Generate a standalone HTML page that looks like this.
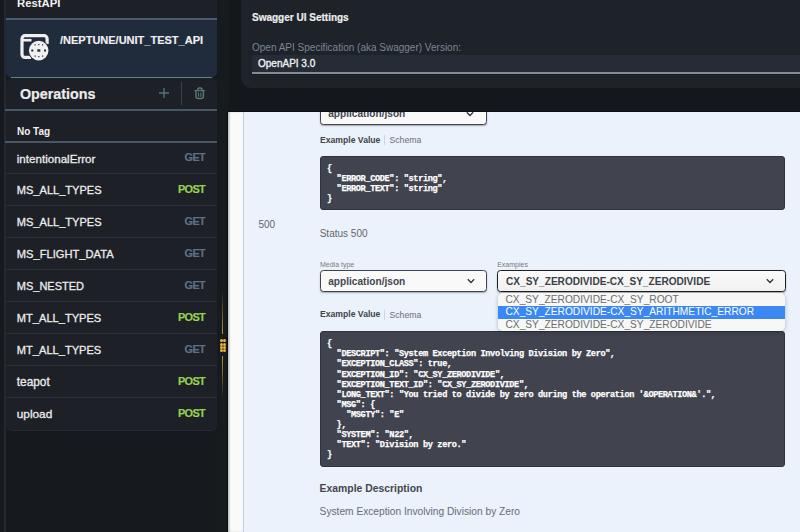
<!DOCTYPE html>
<html><head><meta charset="utf-8">
<style>
*{margin:0;padding:0;box-sizing:border-box}
html,body{width:800px;height:532px;overflow:hidden;background:#16191d;font-family:"Liberation Sans",sans-serif;position:relative}
.abs{position:absolute;line-height:1}
/* sidebar */
#side{left:0;top:0;width:228px;height:532px;background:#16191d}
#sideline{left:3.8px;top:0;width:2.2px;height:532px;background:#232930}
#restpanel{left:5px;top:-10px;width:212.5px;height:88px;background:#1d2026;border-radius:0 0 10px 10px}
#resttitle{left:17px;top:-2.2px;font-weight:bold;font-size:11.3px;color:#f2f2f2;white-space:nowrap}
#restline{left:5px;top:18px;width:212.5px;height:1.5px;background:#4b5b6d}
#card{left:5px;top:19px;width:212.5px;height:59px;background:#202b3c;border-radius:0 0 8px 8px}
#cardline{left:11px;top:77px;width:200.5px;height:1.2px;background:#5f8479}
#apiname{left:60px;top:34.7px;font-weight:bold;font-size:11px;color:#f0f0f0;-webkit-text-stroke:0.15px #f0f0f0;white-space:nowrap}
#ops{left:5px;top:78px;width:212.5px;height:353px;background:#1d2026;border-radius:8px;border-bottom:1.3px solid #262b32}
#opstitle{left:20px;top:86.9px;font-weight:bold;font-size:14.3px;color:#ececec;-webkit-text-stroke:0.2px #ececec;white-space:nowrap}
.hline{position:absolute;left:5px;width:212.5px;height:1.5px;background:#4a5765}
#notag{left:17px;top:126.5px;font-weight:bold;font-size:10px;color:#f0f0f0}
.row{position:absolute;left:5px;width:212px;height:31px}
.row .n{position:absolute;left:11.8px;top:10.6px;-webkit-text-stroke:0.3px #ececec;line-height:1;font-size:11.5px;color:#ececec;white-space:nowrap}
.row .m{position:absolute;right:11.9px;top:9.9px;-webkit-text-stroke:0.2px currentColor;line-height:1;font-weight:bold;font-size:10.9px;letter-spacing:-0.62px;white-space:nowrap}
.get{color:#5d7085}
.post{color:#96d14d}
#splitter{left:217px;top:0;width:11.8px;height:532px;background:#161b1e}
#yline1{left:222.2px;top:290px;width:1.3px;height:43.5px;background:linear-gradient(to bottom,rgba(200,150,50,0),#b98f3c)}
#yline2{left:222.2px;top:356px;width:1.3px;height:43.5px;background:linear-gradient(to top,rgba(200,150,50,0),#b98f3c)}
.dot{position:absolute;width:3px;height:3px;border-radius:50%;background:#e9b23c}
/* top dialog */
#dlg{left:240.5px;top:0;width:570px;height:88px;background:#1e2229;border-radius:0 0 0 10px}
#dlgtitle{left:252px;top:12.7px;font-weight:bold;font-size:10px;color:#ededed;-webkit-text-stroke:0.2px #ededed;white-space:nowrap}
#dlglabel{left:252px;top:43px;font-size:10px;color:#7b8794;white-space:nowrap}
#inp{left:252px;top:55px;width:560px;height:19.3px;background:#252c36;border-bottom:2px solid #858c94;box-shadow:0 1px 0 #15181c;border-radius:3px 0 0 0}
#inptext{left:258px;top:58.6px;font-size:10px;-webkit-text-stroke:0.35px #f0f0f0;color:#f0f0f0;white-space:nowrap}
/* main */
#main{left:228px;top:112px;width:572px;height:420px;background:#fafafa;box-shadow:inset 1.5px 0 1.5px rgba(0,0,0,.25)}
#mainshadow{left:228px;top:110px;width:572px;height:2px;background:#0e1013}
#panel{left:243px;top:112px;width:557px;height:420px;background:#ebf2fb;border-left:1.5px solid #b7cff2}
.t{position:absolute;white-space:nowrap;line-height:1}
.sel{position:absolute;background:#f9f9f9;border:1.5px solid #41444e;border-radius:3.5px;box-shadow:0 1px 1.5px rgba(0,0,0,.3)}
.chev{position:absolute;width:5px;height:5px;border-right:1.3px solid #333;border-bottom:1.3px solid #333;transform:rotate(45deg)}
.code{position:absolute;background:#41444e;border:1px solid #30333a;border-radius:3px;color:#fff;font-family:"Liberation Mono",monospace;font-weight:bold;font-size:8.6px;letter-spacing:-0.36px;line-height:10.1px;padding:7.8px 6px 6px;white-space:pre;-webkit-text-stroke:0.25px #fff}
</style></head><body>
<div id="side" class="abs"></div>
<div id="restpanel" class="abs"></div>
<div id="resttitle" class="abs">RestAPI</div>
<div id="card" class="abs"></div>
<div id="restline" class="abs"></div>
<div id="ops" class="abs"></div>
<div id="cardline" class="abs"></div>
<svg class="abs" style="left:19px;top:32px" width="34" height="32" viewBox="0 0 34 32">
  <path d="M12 25.4 H6 a3 3 0 0 1 -3 -3 V6.7 a3 3 0 0 1 3 -3 H25.1 a3 3 0 0 1 3 3 V12" fill="none" stroke="#f0f0f0" stroke-width="3.2"/>
  <path d="M3.5 8.2 H12.5" stroke="#f0f0f0" stroke-width="2.6"/>
  <circle cx="19.7" cy="18.6" r="10.6" fill="#202b3c"/>
  <circle cx="19.7" cy="18.6" r="9.8" fill="#f0f0f0"/>
  <g fill="#202b3c">
    <rect x="12.3" y="17.5" width="2" height="2"/><rect x="18.3" y="17.3" width="3" height="2.4"/><rect x="25" y="17.5" width="2" height="2"/>
    <rect x="15.5" y="12.3" width="1.2" height="1.2"/><rect x="19.2" y="12" width="1.2" height="1.2"/><rect x="23" y="12.3" width="1.2" height="1.2"/>
    <rect x="15.5" y="23.5" width="1.2" height="1.2"/><rect x="19.2" y="24" width="1.2" height="1.2"/><rect x="23" y="23.5" width="1.2" height="1.2"/>
  </g>
</svg>
<div id="sideline" class="abs"></div>
<div id="apiname" class="abs">/NEPTUNE/UNIT_TEST_API</div>
<div id="opstitle" class="abs">Operations</div>
<svg class="abs" style="left:159px;top:88.3px" width="10" height="10" viewBox="0 0 10 10"><path d="M5 0V10M0 5H10" stroke="#587371" stroke-width="1.35"/></svg>
<div class="abs" style="left:181px;top:82px;width:1px;height:23px;background:#3a4048"></div>
<svg class="abs" style="left:188px;top:82px" width="24" height="22" viewBox="0 0 24 22"><g fill="none" stroke="#5a7673" stroke-width="1.45" stroke-linecap="round"><path d="M6.9 8.6H16.4"/><path d="M9.6 8.3V7.6A1.7 1.7 0 0 1 11.3 5.9H12.4A1.7 1.7 0 0 1 14.1 7.6V8.3"/><path d="M8 8.8V14.6A1.8 1.8 0 0 0 9.8 16.4H13.6A1.8 1.8 0 0 0 15.4 14.6V8.8"/></g><path d="M10.5 10.5V14.7M12.9 10.5V14.7" stroke="#5a7673" stroke-width="1.1"/></svg>
<div class="hline" style="top:109px"></div>
<div id="notag" class="abs">No Tag</div>
<div class="hline" style="top:141px"></div>
<div class="row" style="top:142px"><span class="n" style="font-size:11.6px">intentionalError</span><span class="m get">GET</span></div>
<div class="abs" style="left:5px;top:173px;width:212px;height:1px;background:#2a2f36"></div>
<div class="row" style="top:174px"><span class="n" style="font-size:11.05px">MS_ALL_TYPES</span><span class="m post">POST</span></div>
<div class="abs" style="left:5px;top:205px;width:212px;height:1px;background:#2a2f36"></div>
<div class="row" style="top:206px"><span class="n" style="font-size:11.05px">MS_ALL_TYPES</span><span class="m get">GET</span></div>
<div class="abs" style="left:5px;top:237px;width:212px;height:1px;background:#2a2f36"></div>
<div class="row" style="top:238px"><span class="n" style="font-size:11.15px">MS_FLIGHT_DATA</span><span class="m get">GET</span></div>
<div class="abs" style="left:5px;top:269px;width:212px;height:1px;background:#2a2f36"></div>
<div class="row" style="top:270px"><span class="n" style="font-size:11.0px">MS_NESTED</span><span class="m get">GET</span></div>
<div class="abs" style="left:5px;top:301px;width:212px;height:1px;background:#2a2f36"></div>
<div class="row" style="top:302px"><span class="n" style="font-size:11.1px">MT_ALL_TYPES</span><span class="m post">POST</span></div>
<div class="abs" style="left:5px;top:333px;width:212px;height:1px;background:#2a2f36"></div>
<div class="row" style="top:334px"><span class="n" style="font-size:11.1px">MT_ALL_TYPES</span><span class="m get">GET</span></div>
<div class="abs" style="left:5px;top:365px;width:212px;height:1px;background:#2a2f36"></div>
<div class="row" style="top:366px"><span class="n" style="font-size:11.85px">teapot</span><span class="m post">POST</span></div>
<div class="abs" style="left:5px;top:397px;width:212px;height:1px;background:#2a2f36"></div>
<div class="row" style="top:398px"><span class="n" style="font-size:11.8px">upload</span><span class="m post">POST</span></div>
<div id="splitter" class="abs"></div>
<div id="yline1" class="abs"></div>
<div id="yline2" class="abs"></div>

<div class="dot" style="left:219.8px;top:339.4px"></div><div class="dot" style="left:222.9px;top:339.4px"></div><div class="dot" style="left:219.8px;top:342.5px"></div><div class="dot" style="left:222.9px;top:342.5px"></div><div class="dot" style="left:219.8px;top:345.6px"></div><div class="dot" style="left:222.9px;top:345.6px"></div><div class="dot" style="left:219.8px;top:348.7px"></div><div class="dot" style="left:222.9px;top:348.7px"></div>


<div id="main" class="abs"></div>
<div id="mainshadow" class="abs"></div><div class="abs" style="left:226.5px;top:112px;width:1.5px;height:420px;background:#0c0e10"></div>
<div id="panel" class="abs"></div>

<div class="t" style="left:320px;top:102.5px;width:167px;height:22px" ></div>
<div class="sel" style="left:319.5px;top:102.5px;width:167.5px;height:22px"></div>
<div class="t" style="left:328.2px;top:109.3px;font-weight:bold;font-size:10.15px;color:#44474f">application/json</div>
<svg class="abs" style="left:466.2px;top:111px" width="8" height="6" viewBox="0 0 8 6"><path d="M0.8 1.3L4 4.5L7.2 1.3" fill="none" stroke="#2e3036" stroke-width="1.25"/></svg>
<div id="topcover" class="abs" style="left:228.8px;top:0;width:572px;height:112px;background:#14171b"></div>
<div class="abs" style="left:228px;top:110.5px;width:572px;height:1.5px;background:#0c0e10"></div>
<div id="dlg" class="abs"></div>
<div id="dlgtitle" class="abs">Swagger UI Settings</div>
<div id="dlglabel" class="abs">Open API Specification (aka Swagger) Version:</div>
<div id="inp" class="abs"></div>
<div id="inptext" class="abs">OpenAPI 3.0</div>
<div class="t" style="left:320px;top:135.5px;font-weight:bold;font-size:8.65px;color:#404249">Example Value</div>
<div class="abs" style="left:384px;top:135px;width:1px;height:10px;background:#cfd6df"></div>
<div class="t" style="left:389.5px;top:135.9px;font-size:8.67px;color:#6a6c72">Schema</div>
<div class="code" style="left:320px;top:156px;width:465px;height:53.5px;padding-top:7px">{
  "ERROR_CODE": "string",
  "ERROR_TEXT": "string"
}</div>
<div class="t" style="left:258.5px;top:219.6px;font-size:10px;color:#63666d">500</div>
<div class="t" style="left:319.7px;top:228.8px;font-size:10px;color:#63666d">Status 500</div>
<div class="t" style="left:320px;top:260.8px;font-size:7px;color:#777a82">Media type</div>
<div class="sel" style="left:319.5px;top:270px;width:167.5px;height:21.8px"></div>
<div class="t" style="left:328.2px;top:276.6px;font-weight:bold;font-size:10.15px;color:#44474f">application/json</div>
<svg class="abs" style="left:466.5px;top:278.3px" width="8" height="6" viewBox="0 0 8 6"><path d="M0.8 1.3L4 4.5L7.2 1.3" fill="none" stroke="#2e3036" stroke-width="1.25"/></svg>
<div class="t" style="left:497.2px;top:261px;font-size:7px;color:#777a82">Examples</div>
<div class="sel" style="left:497.3px;top:270px;width:288.3px;height:21.8px;border:1.8px solid #1d1f24;background:linear-gradient(#fafafa,#f1f1f1)"></div>
<div class="t" style="left:506px;top:277px;font-weight:bold;font-size:10.1px;color:#3c3f47">CX_SY_ZERODIVIDE-CX_SY_ZERODIVIDE</div>
<svg class="abs" style="left:765.5px;top:278.3px" width="8" height="6" viewBox="0 0 8 6"><path d="M0.8 1.3L4 4.5L7.2 1.3" fill="none" stroke="#2e3036" stroke-width="1.25"/></svg>
<div class="t" style="left:320px;top:310.3px;font-weight:bold;font-size:8.65px;color:#404249">Example Value</div>
<div class="abs" style="left:384px;top:309.5px;width:1px;height:10px;background:#cfd6df"></div>
<div class="t" style="left:389.5px;top:310.7px;font-size:8.67px;color:#6a6c72">Schema</div>
<div class="code" style="left:320px;top:330.5px;width:465px;height:136px">{
  "DESCRIPT": "System Exception Involving Division by Zero",
  "EXCEPTION_CLASS": true,
  "EXCEPTION_ID": "CX_SY_ZERODIVIDE",
  "EXCEPTION_TEXT_ID": "CX_SY_ZERODIVIDE",
  "LONG_TEXT": "You tried to divide by zero during the operation '&amp;OPERATION&amp;'.",
  "MSG": {
    "MSGTY": "E"
  },
  "SYSTEM": "N22",
  "TEXT": "Division by zero."
}</div>
<div class="abs" style="left:498px;top:293.3px;width:287px;height:38px;background:#f7f7f7;border-radius:5px;box-shadow:0 1px 4px rgba(0,0,0,0.25)"></div>
<div class="abs" style="left:498px;top:306.2px;width:287px;height:12.4px;background:#3b87f4"></div>
<div class="t" style="left:505.5px;top:295.1px;font-size:10.2px;color:#6d6d6d">CX_SY_ZERODIVIDE-CX_SY_ROOT</div>
<div class="t" style="left:505.5px;top:307.4px;font-size:10.2px;color:#ffffff">CX_SY_ZERODIVIDE-CX_SY_ARITHMETIC_ERROR</div>
<div class="t" style="left:505.5px;top:320.4px;font-size:10.2px;color:#6d6d6d">CX_SY_ZERODIVIDE-CX_SY_ZERODIVIDE</div>
<div class="t" style="left:319.6px;top:484.2px;font-weight:bold;font-size:10.4px;color:#44464e">Example Description</div>
<div class="t" style="left:319.6px;top:506.5px;font-size:10.2px;color:#686b73">System Exception Involving Division by Zero</div>
</body></html>
